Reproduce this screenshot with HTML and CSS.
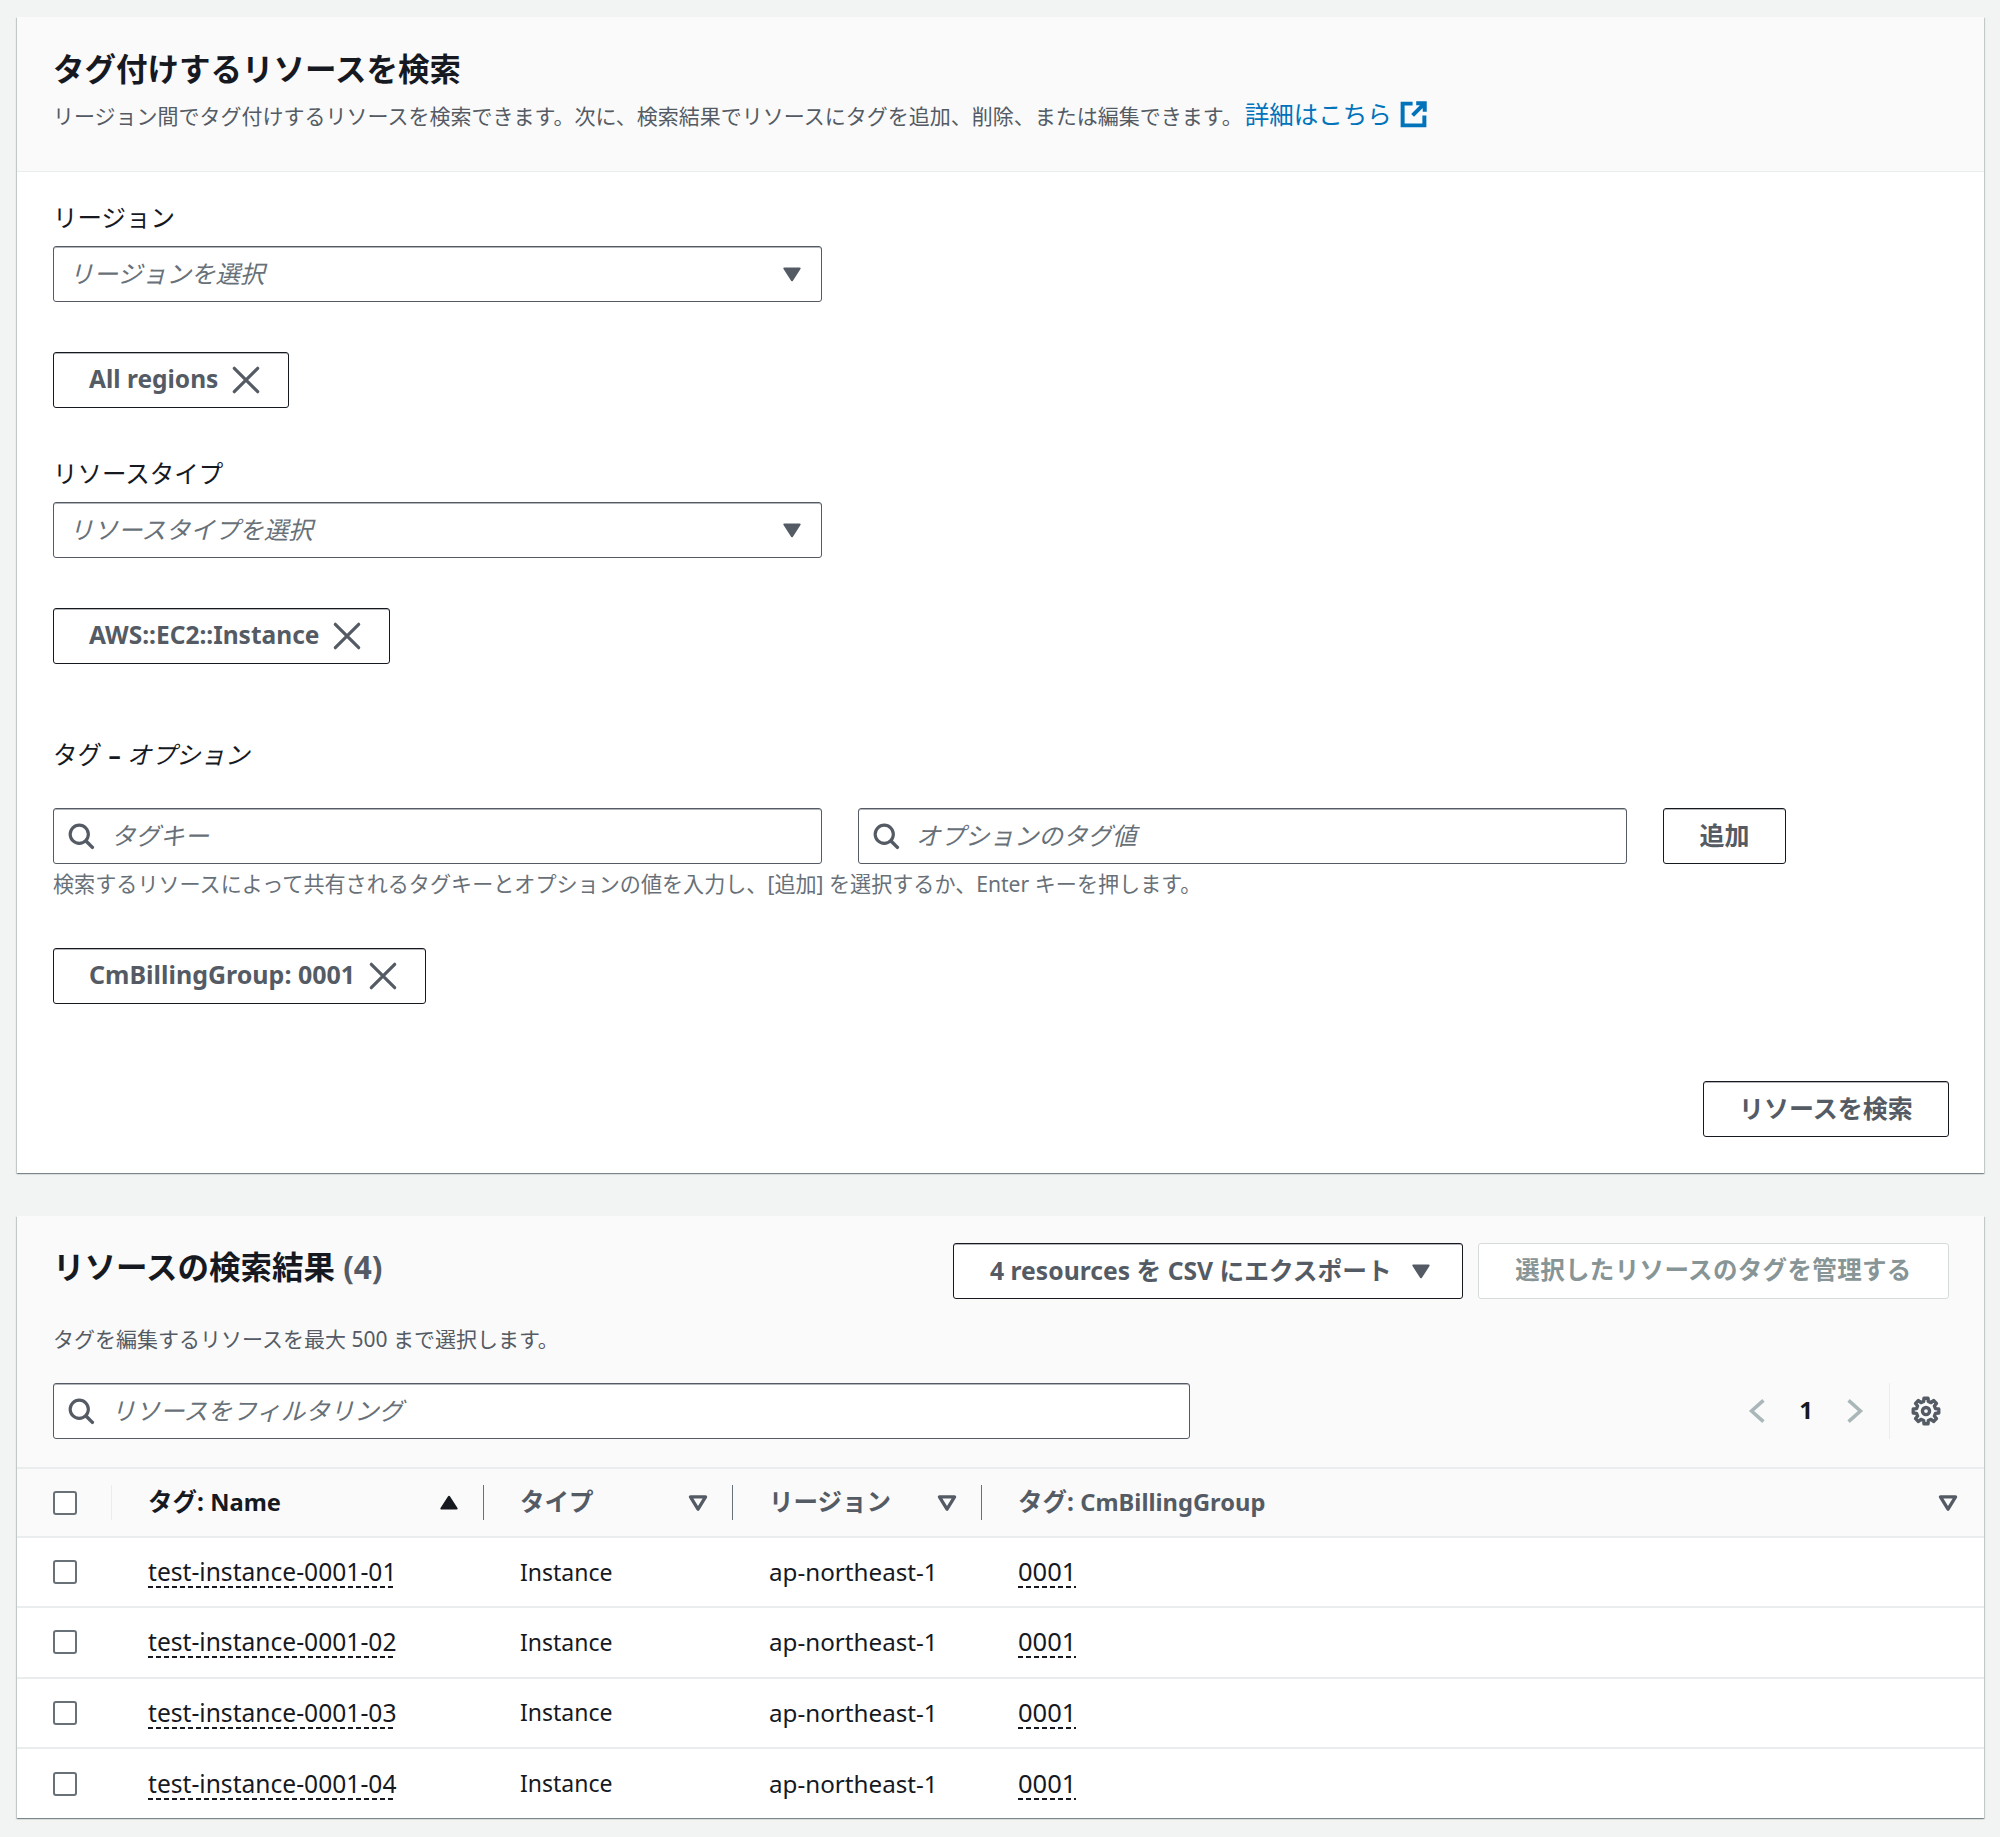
FILE: index.html
```html
<!DOCTYPE html>
<html lang="ja">
<head>
<meta charset="utf-8">
<title>タグ付けするリソースを検索</title>
<link rel="stylesheet" href="styles.css">
</head>
<body>
<svg class="defs" width="0" height="0" aria-hidden="true">
  <symbol id="caret" viewBox="0 0 16 16"><path d="M2.5 4h11L8 12.5z" fill="currentColor" stroke="currentColor" stroke-width="1.6" stroke-linejoin="round"/></symbol>
  <symbol id="hollow" viewBox="0 0 16 16"><path d="M2.5 3.5h11L8 12.5z" fill="none" stroke="currentColor" stroke-width="2.4" stroke-linejoin="round"/></symbol>
  <symbol id="up" viewBox="0 0 16 16"><path d="M2.5 12h11L8 3.5z" fill="currentColor" stroke="currentColor" stroke-width="1.6" stroke-linejoin="round"/></symbol>
  <symbol id="close" viewBox="0 0 16 16"><path d="M2.5 2.5l11 11M13.5 2.5l-11 11" fill="none" stroke="currentColor" stroke-width="1.5" stroke-linecap="round"/></symbol>
  <symbol id="search" viewBox="0 0 16 16"><circle cx="7" cy="7" r="5.2" fill="none" stroke="currentColor" stroke-width="1.8"/><path d="M11 11l3.5 3.5" fill="none" stroke="currentColor" stroke-width="2" stroke-linecap="round"/></symbol>
</svg>
<main class="page">
  <section class="card">
    <header class="card-head">
      <h1 class="title">タグ付けするリソースを検索</h1>
      <p class="desc">リージョン間でタグ付けするリソースを検索できます。次に、検索結果でリソースにタグを追加、削除、または編集できます。<a class="link" href="#">詳細はこちら<svg class="ext" viewBox="0 0 16 16"><path d="M14 8.5V14H2V2h5.5M9.5 1.8h4.7v4.7M14 2L7.5 8.5" fill="none" stroke="currentColor" stroke-width="2.2"/></svg></a></p>
    </header>
    <div class="form">
      <div class="label">リージョン</div>
      <div class="field select"><span class="ph">リージョンを選択</span><svg class="caret"><use href="#caret"/></svg></div>
      <div class="token tk-a">All regions<svg class="x"><use href="#close"/></svg></div>
      <div class="label lb-b">リソースタイプ</div>
      <div class="field select"><span class="ph">リソースタイプを選択</span><svg class="caret"><use href="#caret"/></svg></div>
      <div class="token tk-a">AWS::EC2::Instance<svg class="x"><use href="#close"/></svg></div>
      <div class="label lb-c">タグ <span class="dash">–</span> <i class="opt">オプション</i></div>
      <div class="tag-row">
        <div class="field search key"><svg class="mag"><use href="#search"/></svg><span class="ph">タグキー</span></div>
        <div class="field search val"><svg class="mag"><use href="#search"/></svg><span class="ph">オプションのタグ値</span></div>
        <button class="btn add" type="button">追加</button>
      </div>
      <div class="hint">検索するリソースによって共有されるタグキーとオプションの値を入力し、[追加] を選択するか、Enter キーを押します。</div>
      <div class="token tk-c">CmBillingGroup: 0001<svg class="x"><use href="#close"/></svg></div>
      <div class="actions"><button class="btn find" type="button">リソースを検索</button></div>
    </div>
  </section>

  <section class="card second">
    <header class="res-head">
      <div class="res-top">
        <h2 class="title res-title">リソースの検索結果 <span class="count">(4)</span></h2>
        <div class="res-btns">
          <button class="btn export" type="button"><span class="btn-t">4 resources を CSV にエクスポート</span><svg class="caret"><use href="#caret"/></svg></button>
          <button class="btn manage" type="button" disabled><span class="btn-t">選択したリソースのタグを管理する</span></button>
        </div>
      </div>
      <p class="desc small">タグを編集するリソースを最大 500 まで選択します。</p>
      <div class="tools">
        <div class="field search filter"><svg class="mag"><use href="#search"/></svg><span class="ph">リソースをフィルタリング</span></div>
        <div class="pager">
          <svg class="chev" viewBox="0 0 16 24"><path d="M13 3L3 12l10 9" fill="none" stroke="currentColor" stroke-width="3"/></svg>
          <span class="num">1</span>
          <svg class="chev" viewBox="0 0 16 24"><path d="M3 3l10 9-10 9" fill="none" stroke="currentColor" stroke-width="3"/></svg>
          <span class="vr"></span>
          <svg class="gear" viewBox="0 0 16 16"><polygon fill="none" stroke="currentColor" stroke-width="1.8" stroke-linejoin="round" points="6.74,2.95 6.92,1.19 9.08,1.19 9.26,2.95 10.68,3.54 12.05,2.42 13.58,3.95 12.46,5.32 13.05,6.74 14.81,6.92 14.81,9.08 13.05,9.26 12.46,10.68 13.58,12.05 12.05,13.58 10.68,12.46 9.26,13.05 9.08,14.81 6.92,14.81 6.74,13.05 5.32,12.46 3.95,13.58 2.42,12.05 3.54,10.68 2.95,9.26 1.19,9.08 1.19,6.92 2.95,6.74 3.54,5.32 2.42,3.95 3.95,2.42 5.32,3.54"/><circle cx="8" cy="8" r="1.9" fill="none" stroke="currentColor" stroke-width="1.8"/></svg>
        </div>
      </div>
    </header>
    <table class="tbl">
      <colgroup><col class="c0"><col class="c1"><col class="c2"><col class="c3"><col></colgroup>
      <thead>
        <tr>
          <th><div class="th sel"><span class="cb"></span></div></th>
          <th><div class="th on"><span class="th-t">タグ: <span class="lat">Name</span></span><svg class="sort"><use href="#up"/></svg></div></th>
          <th><div class="th"><span class="th-t">タイプ</span><svg class="sort"><use href="#hollow"/></svg></div></th>
          <th><div class="th"><span class="th-t">リージョン</span><svg class="sort"><use href="#hollow"/></svg></div></th>
          <th><div class="th last"><span class="th-t">タグ: <span class="lat">CmBillingGroup</span></span><svg class="sort"><use href="#hollow"/></svg></div></th>
        </tr>
      </thead>
      <tbody>
        <tr><td><span class="cb"></span></td><td><span class="dot">test-instance-0001-01</span></td><td class="type">Instance</td><td class="region">ap-northeast-1</td><td><span class="dot tag">0001</span></td></tr>
        <tr><td><span class="cb"></span></td><td><span class="dot">test-instance-0001-02</span></td><td class="type">Instance</td><td class="region">ap-northeast-1</td><td><span class="dot tag">0001</span></td></tr>
        <tr><td><span class="cb"></span></td><td><span class="dot">test-instance-0001-03</span></td><td class="type">Instance</td><td class="region">ap-northeast-1</td><td><span class="dot tag">0001</span></td></tr>
        <tr><td><span class="cb"></span></td><td><span class="dot">test-instance-0001-04</span></td><td class="type">Instance</td><td class="region">ap-northeast-1</td><td><span class="dot tag">0001</span></td></tr>
      </tbody>
    </table>
  </section>
</main>
</body>
</html>
```

FILE: styles.css
```css
* { box-sizing: border-box; }
html, body { margin: 0; padding: 0; }
body {
  background: #f2f3f3;
  color: #16191f;
  font-family: "Noto Sans", "Noto Sans CJK JP", sans-serif;
  font-size: 24.5px;
}
.defs { position: absolute; }
.page { padding: 17px 16px 17px 17px; }
.card {
  background: #fff;
  box-shadow: 0 1px 1px 0 rgba(0,28,36,.3), 1px 1px 1px 0 rgba(0,28,36,.15), -1px 1px 1px 0 rgba(0,28,36,.15);
}
.second { margin-top: 43px; }
.card-head {
  background: #fafafa;
  border-bottom: 1px solid #eaeded;
  height: 155px;
  padding: 32px 36px 0;
}
.title {
  margin: 0;
  font-size: 31.5px;
  line-height: 40px;
  font-weight: 700;
  color: #16191f;
}
.desc {
  margin: 11px 0 0;
  font-size: 21px;
  line-height: 30px;
  color: #545b64;
}
.link { color: #0073bb; text-decoration: none; font-size: 24.5px; margin-left: 2px; }
.ext { width: 29px; height: 29px; margin-left: 7px; vertical-align: -5px; }
.form { padding: 28px 35px 36px 36px; }
.label { font-size: 24.5px; line-height: 36px; margin-bottom: 10px; color: #16191f; }
.lb-b { margin-top: 48px; }
.lb-c { margin-top: 73px; margin-bottom: 35px; }
.dash { font-weight: 700; }
.opt { font-style: italic; }
.field {
  display: flex;
  align-items: center;
  height: 56px;
  padding-bottom: 4px;
  background: #fff;
  border: 1px solid #545b64;
  border-radius: 3px;
  box-shadow: inset 0 1px 0 rgba(84,91,100,.45);
}
.select { width: 769px; padding-left: 15px; padding-right: 18px; justify-content: space-between; }
.ph { font-style: italic; font-size: 24.5px; color: #687078; }
.caret { width: 22px; height: 22px; color: #545b64; flex: none; }
.select .caret { margin-bottom: -4px; }
.token {
  display: flex;
  align-items: center;
  width: fit-content;
  height: 56px;
  margin-top: 50px;
  padding: 0 25px 4px 35px;
  border: 1px solid #16191f;
  border-radius: 3px;
  box-shadow: inset 0 1px 0 rgba(84,91,100,.45);
  font-size: 24.5px;
  font-weight: 700;
  color: #545b64;
}
.tk-c { margin-top: 51px; font-size: 25px; }
.x { width: 34px; height: 34px; margin: 0 0 -4px 11px; color: #545b64; flex: none; }
.tag-row { display: flex; }
.search { padding-left: 13px; }
.key, .val { width: 769px; }
.val { margin-left: 36px; }
.mag { width: 28px; height: 28px; margin: 0 16px -4px 0; color: #545b64; flex: none; }
.hint { font-size: 21.1px; line-height: 26px; margin: 7px 0 1px; color: #687078; }
.btn {
  display: inline-flex;
  align-items: center;
  justify-content: center;
  height: 56px;
  background: #fff;
  border: 1px solid #16191f;
  border-radius: 3px;
  box-shadow: inset 0 1px 0 rgba(84,91,100,.45);
  font-family: inherit;
  font-size: 25px;
  font-weight: 700;
  color: #545b64;
  padding: 0 0 5px;
}
.add { width: 123px; margin-left: 36px; }
.actions { display: flex; justify-content: flex-end; margin-top: 77px; }
.find { width: 246px; }
.res-head {
  background: #fafafa;
  border-bottom: 2px solid #eaeded;
  height: 253px;
  padding: 27px 35px 0 36px;
}
.res-top { display: flex; justify-content: space-between; align-items: center; height: 56px; }
.res-title { padding-bottom: 8px; }
.count { color: #545b64; }
.res-btns { display: flex; gap: 15px; }
.export { width: 510px; padding: 0 30px 0 36px; justify-content: space-between; font-size: 24.7px; }
.btn-t { padding-bottom: 5px; }
.export .caret { margin-left: 10px; }
.manage { width: 471px; padding: 0; background: #fff; border-color: #d5dbdb; box-shadow: none; color: #879596; letter-spacing: .35px; font-size: 24.5px; }
.small { margin-top: 25px; }
.tools { display: flex; justify-content: space-between; align-items: center; margin-top: 29px; }
.filter { width: 1137px; }
.pager { display: flex; align-items: center; height: 56px; color: #545b64; }
.chev { width: 19px; height: 30px; color: #aab7b8; flex: none; }
.num { width: 78px; padding-bottom: 3px; text-align: center; font-weight: 700; color: #16191f; font-size: 24px; }
.vr { width: 1px; height: 56px; background: #eaeded; margin: 0 21px 0 25px; }
.gear { width: 30px; height: 30px; margin-right: 8px; color: #545b64; flex: none; }
.tbl { width: 100%; border-collapse: collapse; table-layout: fixed; }
.c0 { width: 95px; }
.c1 { width: 372px; }
.c2 { width: 249px; }
.c3 { width: 249px; }
.tbl th {
  height: 68px;
  padding: 0;
  background: #fafafa;
  border-bottom: 2px solid #eaeded;
  text-align: left;
  font-size: 24.5px;
  font-weight: 700;
  color: #545b64;
}
.th {
  display: flex;
  align-items: center;
  justify-content: space-between;
  height: 35px;
  padding: 0 23px 0 36px;
  border-right: 1px solid #687078;
}
.th-t { padding-bottom: 4px; }
.lat { font-size: 23.7px; }
.on { color: #16191f; }
.sel { padding: 0 0 0 36px; border-right-color: #eaeded; justify-content: flex-start; }
.last { border-right: 0; padding-right: 25px; }
.sort { width: 22px; height: 22px; color: #545b64; flex: none; }
.on .sort { color: #16191f; }
.tbl td {
  height: 70.3px;
  padding: 0 0 1px 36px;
  font-size: 24.6px;
  color: #16191f;
  border-bottom: 2px solid #eaeded;
}
.tbl td.type { font-size: 23px; }
.tbl td.region { font-size: 24.2px; }
.tbl tbody tr:last-child td { border-bottom: 0; }
.cb {
  display: block;
  width: 24px;
  height: 24px;
  background: #fff;
  border: 2px solid #687078;
  border-radius: 3px;
}
.tbl td .cb { margin-top: 1px; }
.dot {
  display: inline-block;
  line-height: 33px;
  background: repeating-linear-gradient(90deg, #16191f 0 5px, transparent 5px 8px) left bottom / 100% 2px no-repeat;
}
.tag { font-size: 25.5px; }
```
